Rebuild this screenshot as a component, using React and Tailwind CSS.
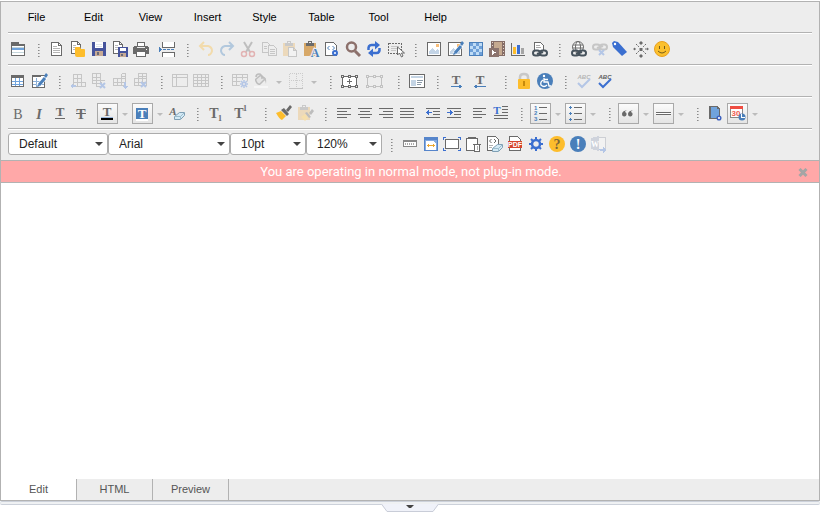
import React, { useState } from "react";

const DARK = "#6a6a6a";
const LIGHT = "#c6c6c6";
const BLUE = "#4a7fba";
const ROYAL = "#3b6fd0";
const PALE = "#b4c6e6";
const YELLOW = "#fdbd2c";

const Glyph = ({ x, y, size = 16, fill = DARK, bold, italic, children }) => (
  <text
    x={x}
    y={y}
    fontSize={size}
    fill={fill}
    stroke="none"
    textAnchor="middle"
    fontWeight={bold ? 700 : 400}
    fontStyle={italic ? "italic" : "normal"}
    fontFamily="'Liberation Serif', serif"
  >
    {children}
  </text>
);

const Grid = ({ x = 1, y = 2, w = 14, h = 13, cols, rows, color = LIGHT }) => (
  <path
    stroke={color}
    d={
      `M${x + 0.5} ${y + 0.5}h${w - 1}v${h - 1}h${1 - w}z` +
      cols.map((c) => `M${c + 0.5} ${y}v${h}`).join("") +
      rows.map((r) => `M${x} ${r + 0.5}h${w}`).join("")
    }
  />
);

const Lines = ({ rows, color = DARK }) => (
  <path stroke={color} d={rows.map(([x, y, w]) => `M${x} ${y + 0.5}h${w}`).join("")} />
);

const SmallDoc = ({ color = DARK }) => (
  <>
    <path fill="#fff" stroke={color} d="M1.5 .5h6l3 3v9h-9z" />
    <path stroke={color} d="M7.5 .5v3h3" />
    <path stroke="#b9b9b9" d="M3 4.5h3M3 6.5h6M3 8.5h6" />
  </>
);

const Chain = ({ y = 12, color = "#46525c" }) => (
  <g stroke={color} strokeWidth="2" shapeRendering="auto">
    <rect x="2" y={y - 2.5} width="7" height="5" rx="2.5" />
    <rect x="9" y={y - 2.5} width="7" height="5" rx="2.5" />
    <path d={`M6 ${y + 1}L12 ${y - 1}`} />
  </g>
);

const Clipboard = ({ color = "#ecd9bb", clip = "#c9c9c9" }) => (
  <>
    <rect x="1" y="2" width="12" height="13" fill={color} />
    <path fill={clip} d="M3 2h2V0h4v2h2v3H3z" />
    <rect x="6" y="1" width="2" height="1" fill="#eee" />
  </>
);

const Picture = () => (
  <>
    <rect x="1.5" y="1.5" width="13" height="13" fill="#fff" stroke={DARK} />
    <path fill="#c3d4e6" d="M3 10l3-3 3 3 2-2 2 2v3H3z" />
    <rect x="10" y="3" width="3" height="3" fill="#f7bd7a" />
  </>
);

const Pencil = () => (
  <g shapeRendering="auto">
    <path stroke="#fff" strokeWidth="4" d="M7 13l8-9" />
    <path stroke={BLUE} strokeWidth="3" d="M8 12l6-7" />
    <path fill={BLUE} d="M13 3l2-3 2 2-2 3zM6 14l1-3 2 2z" />
  </g>
);

const Dot = ({ fill, children, text = "#fff" }) => (
  <g shapeRendering="auto">
    <circle cx="8" cy="8" r="8" fill={fill} />
    <text x="8" y="13" fontSize="14" fontWeight="700" textAnchor="middle" fill={text} fontFamily="'Liberation Serif', serif">
      {children}
    </text>
  </g>
);

const Handles = ({ color }) => (
  <>
    <rect x="1.5" y="3.5" width="14" height="10" stroke={color} fill={color === DARK ? "#fff" : "none"} />
    {[0, 7, 14].map((x) =>
      [2, 12].map((y) => (
        <rect key={x + "-" + y} x={x + 0.5} y={y + 0.5} width="2" height="2" fill="#eee" stroke={color} />
      ))
    )}
  </>
);

const TableCells = ({ d, children }) => (
  <>
    <path stroke={LIGHT} d={d} />
    {children}
  </>
);

const Cross = ({ x, y }) => (
  <path stroke={PALE} strokeWidth="2" shapeRendering="auto" d={`M${x} ${y}l5 5m0-5l-5 5`} />
);

const Eraser = ({ x = 6, y = 7 }) => (
  <g shapeRendering="auto" transform={`translate(${x} ${y})`}>
    <path fill="#d3e9f5" stroke="#7f9fb4" d="M.5 5.5l5-4h5v3l-4 4h-6z" />
    <path stroke="#9bbccc" d="M.5 5.5h6l4-4M6.5 5.5v3" />
  </g>
);

const Gear = ({ color = ROYAL }) => (
  <g shapeRendering="auto" stroke={color}>
    <circle cx="8" cy="8" r="4" strokeWidth="2.5" />
    <path strokeWidth="2" d="M8 1v3M8 12v3M1 8h3M12 8h3M3 3l2 2M11 11l2 2M13 3l-2 2M5 11l-2 2" />
  </g>
);

const icons = {
  form: (
    <>
      <rect x="1.5" y="4.5" width="13" height="10" fill="#fff" stroke={DARK} />
      <path fill={DARK} d="M1 1h8v2h6v2H1z" />
      <path stroke="#70a3dc" strokeWidth="2" d="M2 8h12" />
      <path stroke="#c4d6dc" d="M2 6.5h12M2 11.5h12" />
    </>
  ),
  newDoc: (
    <>
      <path fill="#fff" stroke={DARK} d="M2.5 1.5h7l3 3v10h-10z" />
      <path stroke={DARK} d="M9.5 1.5v3h3" />
      <path stroke="#b5b5b5" d="M4 5.5h4M4 7.5h7M4 9.5h7M4 11.5h7" />
    </>
  ),
  open: (
    <>
      <SmallDoc />
      <path fill={YELLOW} shapeRendering="auto" d="M6 6h4l1 2h3q1 0 1 1v6q0 1-1 1H7q-2 0-2-2V7q0-1 1-1z" />
    </>
  ),
  save: (
    <>
      <rect x="1" y="1" width="14" height="14" fill="#46549c" />
      <rect x="4" y="1" width="8" height="6" fill="#fff" />
      <path stroke="#dde3ea" d="M5 3.5h6M5 5.5h6" />
      <rect x="4" y="10" width="8" height="5" fill="#c7aa95" />
      <rect x="6" y="11" width="2" height="3" fill="#6a6a78" />
    </>
  ),
  saveAs: (
    <>
      <SmallDoc />
      <rect x="6" y="6" width="10" height="10" fill="#46549c" />
      <rect x="8" y="7" width="6" height="3" fill="#fff" />
      <rect x="8" y="12" width="6" height="4" fill="#c7aa95" />
      <rect x="9" y="13" width="2" height="2" fill="#6a6a78" />
    </>
  ),
  print: (
    <>
      <path fill={DARK} d="M1 5h3v2h8V5h3v1h1v7H0V6h1z" />
      <rect x="4.5" y="1.5" width="7" height="4" fill="#fff" stroke={DARK} />
      <rect x="3.5" y="10.5" width="9" height="5" fill="#fff" stroke={DARK} />
      <rect x="13" y="8" width="1" height="1" fill="#fff" />
    </>
  ),
  pageBreak: (
    <>
      <path fill="#fff" stroke={DARK} d="M4.5 1v5.5h12V1M4.500 16v-4.500h12v4.500" />
      <path stroke={BLUE} strokeDasharray="3 1" d="M5 8.5h12" />
      <path fill={BLUE} d="M1 6l3 2v1l-3 2z" />
    </>
  ),
  undo: (
    <path stroke="#f2dbac" strokeWidth="2" shapeRendering="auto" d="M6 1L2 5l4 4M2 5h8q4 1 4 5-1 4-4 4" />
  ),
  redo: (
    <path stroke="#b2c8dd" strokeWidth="2" shapeRendering="auto" d="M10 1l4 4-4 4M14 5H6q-4 1-4 5 1 4 4 4" />
  ),
  cut: (
    <g shapeRendering="auto">
      <path stroke="#bebebe" strokeWidth="2" d="M4 1l6 10M12 1L6 11" />
      <circle cx="4" cy="13" r="2.5" stroke="#e2b3b3" strokeWidth="1.5" />
      <circle cx="12" cy="13" r="2.5" stroke="#e2b3b3" strokeWidth="1.5" />
    </g>
  ),
  copy: (
    <>
      <path stroke={LIGHT} d="M1.5 1.5h5l2 2v8h-7zM3 5.5h3M3 7.5h3" />
      <path fill="#eee" stroke={LIGHT} d="M7.5 4.5h5l3 3v7h-8zM9 8.5h5M9 10.5h5M9 12.5h5" />
    </>
  ),
  paste: (
    <>
      <Clipboard />
      <path fill="#f2f2f2" stroke={LIGHT} d="M6.5 6.5h5l3 3v6h-8zM11.5 6.5v3h3" />
    </>
  ),
  pasteText: (
    <>
      <Clipboard color="#d7a868" clip={DARK} />
      <g shapeRendering="auto">
        <text x="12" y="16" fontSize="12" fontWeight="700" textAnchor="middle" fill={BLUE} stroke="#eee" strokeWidth="2" paintOrder="stroke" fontFamily="'Liberation Serif', serif">A</text>
      </g>
    </>
  ),
  source: (
    <>
      <path fill="#fff" stroke={DARK} d="M1.5 1.5h8l3 3v10h-11z" />
      <path stroke={BLUE} shapeRendering="auto" d="M5.5 5L3.5 7l2 2M8.5 5l2 2-2 2" />
      <circle cx="11" cy="12" r="2" fill="#fff" stroke={ROYAL} strokeWidth="2" shapeRendering="auto" />
    </>
  ),
  find: (
    <g shapeRendering="auto" stroke="#8c706b">
      <circle cx="6.5" cy="6" r="4.5" strokeWidth="2.5" />
      <path strokeWidth="3" d="M10 10l5 5" />
    </g>
  ),
  refresh: (
    <g shapeRendering="auto" stroke={ROYAL} strokeWidth="2.5">
      <path d="M2.500 9q-.5-5 3-5H9M13.500 7q.5 5-3 5H7" />
      <path fill={ROYAL} stroke="none" d="M9 0l5 4-5 4.500zM7 7.500V16l-5-4z" />
    </g>
  ),
  selectAll: (
    <>
      <rect x="1.5" y="2.5" width="13" height="10" stroke={DARK} strokeDasharray="2 1" />
      <path stroke={LIGHT} d="M4 5.5h8M4 7.5h6M4 9.5h5" />
      <path fill="#fff" stroke={DARK} shapeRendering="auto" d="M10.5 6v8l2-2 2 4 1.500-1-1.500-3h3z" />
    </>
  ),
  image: <Picture />,
  editImage: (
    <>
      <Picture />
      <Pencil />
    </>
  ),
  background: (
    <>
      <rect x="1.5" y="1.5" width="13" height="13" fill="#bfdcf6" stroke={BLUE} />
      {[0, 1, 2, 3].map((r) =>
        [0, 1].map((c) => (
          <rect key={r + "" + c} x={2 + c * 6 + (r % 2) * 3} y={2 + r * 3} width="3" height="3" fill="#6fa0d8" />
        ))
      )}
    </>
  ),
  video: (
    <>
      <rect x="2" y="0" width="14" height="15" fill="#856d67" />
      <rect x="5" y="1" width="8" height="13" fill="#c5a98f" />
      <path stroke="#e5d8cd" strokeDasharray="1 2" d="M3.5 1v13M14.5 1v13" />
      <rect x="0" y="7" width="10" height="9" fill="#8c746e" />
      <path fill="#fff" d="M3 9l4 2.500L3 14z" />
    </>
  ),
  chart: (
    <>
      <path stroke={DARK} d="M1.5 2v12.500H15" />
      <path fill={YELLOW} d="M3 6h3v7H3z" />
      <path fill={ROYAL} d="M7 4h3v9H7z" />
      <path fill="#a5a5a5" d="M11 7h3v6h-3z" />
    </>
  ),
  fileLink: (
    <>
      <path fill="#fff" stroke={DARK} d="M3.5 9V1.500h6l3 3V9" />
      <path stroke="#aaa" d="M5 4.5h4M5 6.5h5" />
      <Chain />
    </>
  ),
  link: (
    <>
      <g shapeRendering="auto" stroke={DARK}>
        <circle cx="8" cy="6" r="5.5" fill="#fff" />
        <ellipse cx="8" cy="6" rx="2.5" ry="5.5" />
        <path d="M3 4h10M3 7h10" />
      </g>
      <Chain />
    </>
  ),
  unlink: (
    <>
      <Chain y={6} color="#c6c6c6" />
      <Cross x={8} y={9} />
    </>
  ),
  bookmark: (
    <g shapeRendering="auto">
      <path fill={ROYAL} d="M0 2l2-2 4 1 9 10-5 4L1 6z" />
      <circle cx="3" cy="3" r="1.2" fill="#fff" />
    </g>
  ),
  symbol: (
    <g shapeRendering="auto">
      <path fill={DARK} d="M6.5 7h3v3h-3zM8 0l2 2-2 2-2-2zM8 13l2 2-2 2-2-2zM0 8l2-1.500v3zM16 8l-2-1.500v3z" />
      <path stroke={DARK} d="M3 3l3 3M13 3l-3 3M3 13l3-3M13 13l-3-3M1 8h3M12 8h3" strokeDasharray="2 1" />
    </g>
  ),
  emoticon: (
    <g shapeRendering="auto">
      <circle cx="8" cy="8" r="7.5" fill="#fbc02d" stroke="#e9a01f" />
      <path stroke="#755c1b" d="M5.5 5v3M10.5 5v3M4 10q4 4 8 0" />
    </g>
  ),
  table: (
    <>
      <rect x="2" y="3" width="12" height="11" fill="#fff" />
      <path stroke="#70a3dc" d="M5.5 5v9M9.5 5v9M2 8.5h12M2 11.5h12" />
      <path stroke={DARK} d="M1.5 2.5h12v11h-12z" />
      <path fill={DARK} d="M1 2h13v3H1z" />
    </>
  ),
  editTable: (
    <>
      <rect x="1.5" y="2.5" width="12" height="12" fill="#fff" stroke={DARK} />
      <path stroke="#8aaed6" d="M5.5 5v9M2 8.5h11M2 11.5h11" />
      <path fill={DARK} d="M1 2h9v2H1z" />
      <Pencil />
    </>
  ),
  rowBefore: (
    <TableCells d="M3.5 1.5h8v12h-8zM7.5 1.5v12M3.5 5.5h8M3.5 9.5h12v4h-12">
      <path fill={PALE} d="M0 13l3-3v2h3v2H3v2z" />
    </TableCells>
  ),
  rowDelete: (
    <TableCells d="M1.5 .5h8v10h-8zM5.5 .5v13h5v-5M1.5 4.5h8M1.5 7.5h12">
      <Cross x={9} y={10} />
    </TableCells>
  ),
  colBefore: (
    <TableCells d="M1.5 5.5h12v7h-12zM5.5 5v8M9.5 .5v12M9.5 .5h4v12M1.5 9.5h12M9.5 3.5h4">
      <path fill={PALE} d="M12 9h2v4h2l-3 3-3-3h2z" />
    </TableCells>
  ),
  colDelete: (
    <TableCells d="M1.5 5.5h12v7h-12zM5.5 0v13M9.5 .5v8M5.5 .5h8v12M1.5 9.5h12M5.5 3.5h8">
      <Cross x={8} y={9} />
    </TableCells>
  ),
  merge: <Grid x={0} y={1} w={16} h={13} cols={[4]} rows={[4]} />,
  split: <Grid x={0} y={1} w={16} h={13} cols={[4, 8, 12]} rows={[4, 7, 10]} />,
  tableProps: (
    <>
      <Grid x={0} y={1} w={16} h={12} cols={[4, 10]} rows={[4, 8]} />
      <g stroke={PALE} shapeRendering="auto">
        <circle cx="12" cy="11" r="4.500" stroke="none" fill="#ededed" />
        <path strokeWidth="1.5" d="M12 7v8M8 11h8M9 8l6 6M15 8l-6 6" />
        <circle cx="12" cy="11" r="1.5" fill="#ededed" />
      </g>
    </>
  ),
  fill: (
    <>
      <g shapeRendering="auto">
        <path fill="#e5e5e5" stroke="#bdbdbd" strokeWidth="1.5" d="M3 6l5-4 4 4-5 5q-1 1-3-1-2-3-1-4zM3 4q0-3 3-3t3 5" />
        <path fill="#c2c2c2" d="M11 4q3 1 2 7-1-5-3-5z" />
      </g>
      <rect x="1" y="13" width="14" height="2" fill="#f6f6f6" />
    </>
  ),
  border: (
    <>
      <path stroke="#cccccc" strokeDasharray="1 1" d="M1.5 .5h13v14M1.5 .5v14M8.5 1v13M1 7.5h14" />
      <path stroke="#c2c2c2" d="M1 15.5h14" />
    </>
  ),
  layer: (
    <>
      <Handles color={DARK} />
      <path stroke={DARK} d="M6 8.5h5M8.5 6v5" />
    </>
  ),
  layerProps: <Handles color="#c2c2c2" />,
  template: (
    <>
      <rect x=".5" y="1.5" width="15" height="13" fill="#fff" stroke={DARK} />
      <path stroke="#c4d4e4" strokeWidth="2" d="M2 4h12" />
      <rect x="2" y="7" width="5" height="6" fill="#c4d4e4" />
      <path stroke="#8b9aa8" d="M8 7.5h6M8 9.5h5M8 11.5h4" />
    </>
  ),
  ltr: (
    <>
      <Glyph x={8} y={11} size={13} bold>T</Glyph>
      <path stroke={BLUE} d="M3 13.5h10" />
      <path fill={BLUE} d="M11 12h1l2 1v1l-2 1h-1z" />
    </>
  ),
  rtl: (
    <>
      <Glyph x={7} y={11} size={13} bold>T</Glyph>
      <path stroke={BLUE} d="M2 13.5h11" />
      <path fill={BLUE} d="M4 12H3l-2 1v1l2 1h1z" />
    </>
  ),
  lock: (
    <g shapeRendering="auto">
      <path stroke="#c8c8c8" strokeWidth="2.5" d="M4 8V4q0-3 4-3t4 3v4" />
      <rect x="2" y="6" width="12" height="10" rx="1" fill={YELLOW} />
      <path fill="#c78a0c" d="M7 8h2v5H7z" />
    </g>
  ),
  accessibility: (
    <g shapeRendering="auto">
      <circle cx="8" cy="8" r="8" fill={BLUE} />
      <circle cx="7" cy="3" r="1.2" fill="#fff" />
      <path stroke="#fff" strokeWidth="1.3" d="M7 5v4h4l1 4h2M7 6.5h4M6 7q-3 2-2 5 3 3 6 0" />
    </g>
  ),
  spellOff: (
    <>
      <text x="8" y="6" fontSize="6" fontWeight="700" fontStyle="italic" textAnchor="middle" fill="#b5b5b5" fontFamily="'Liberation Sans', sans-serif">ABC</text>
      <path stroke={PALE} strokeWidth="2" shapeRendering="auto" d="M2 10l4 4 8-8" />
    </>
  ),
  spell: (
    <>
      <text x="8" y="6" fontSize="6" fontWeight="700" fontStyle="italic" textAnchor="middle" fill="#5f5f5f" fontFamily="'Liberation Sans', sans-serif">ABC</text>
      <path stroke={ROYAL} strokeWidth="2" shapeRendering="auto" d="M2 10l4 4 8-8" />
    </>
  ),
  bold: <Glyph x={8} y={14} size={14}>B</Glyph>,
  italic: <Glyph x={8} y={14} size={14} italic bold>I</Glyph>,
  underline: (
    <>
      <Glyph x={8} y={11} size={13} bold>T</Glyph>
      <path stroke={DARK} d="M3 13.5h10" />
    </>
  ),
  strike: (
    <>
      <Glyph x={8} y={14} size={14} bold>T</Glyph>
      <path stroke={DARK} d="M3 8.5h10" />
    </>
  ),
  fontColor: (
    <>
      <Glyph x={8} y={11} size={13} bold>T</Glyph>
      <path stroke="#9cb8dc" d="M2 12.5h12" />
      <path fill="#000" d="M2 13h12v2H2z" />
    </>
  ),
  backColor: (
    <>
      <rect x="2" y="3" width="12" height="11" fill={BLUE} />
      <Glyph x={8} y={13} size={13} fill="#fff" bold>T</Glyph>
      <path fill="#fff" d="M2 14h12v2H2z" />
    </>
  ),
  clearFormat: (
    <>
      <Glyph x={4} y={10} size={11} italic bold>A</Glyph>
      <Eraser x={5} y={6} />
    </>
  ),
  subscript: (
    <>
      <Glyph x={6} y={13} size={14} bold>T</Glyph>
      <Glyph x={12} y={16} size={8} bold>1</Glyph>
    </>
  ),
  superscript: (
    <>
      <Glyph x={6} y={13} size={14} bold>T</Glyph>
      <Glyph x={12} y={6} size={8} bold>1</Glyph>
    </>
  ),
  copyFormat: (
    <g shapeRendering="auto">
      <path fill={YELLOW} d="M0 8l5-2 5 5-4 4q-2 0-6-7z" />
      <path fill={DARK} d="M5 5l3-2 5 6-2 2zM10 5l4-5 2 2-4 5z" />
    </g>
  ),
  pasteFormat: (
    <>
      <Clipboard />
      <g shapeRendering="auto">
        <path fill="#f6dfab" d="M4 12l4-3 3 4-3 3z" />
        <path fill="#bdbdbd" d="M8 8l2-1 4 5-2 1zM12 8l3-4 2 2-3 4z" />
      </g>
    </>
  ),
  alignLeft: <Lines rows={[[1, 3, 14], [1, 6, 10], [1, 9, 14], [1, 12, 10]]} />,
  alignCenter: <Lines rows={[[1, 3, 14], [3, 6, 10], [1, 9, 14], [3, 12, 10]]} />,
  alignRight: <Lines rows={[[1, 3, 14], [5, 6, 10], [1, 9, 14], [5, 12, 10]]} />,
  justify: <Lines rows={[[1, 3, 14], [1, 6, 14], [1, 9, 14], [1, 12, 14]]} />,
  outdent: (
    <>
      <Lines rows={[[1, 3, 14], [8, 6, 7], [8, 9, 7], [1, 12, 14]]} />
      <path stroke={ROYAL} d="M1 7.5h6M2.5 6v3M3.5 5v5" />
    </>
  ),
  indent: (
    <>
      <Lines rows={[[1, 3, 14], [8, 6, 7], [8, 9, 7], [1, 12, 14]]} />
      <path stroke={ROYAL} d="M1 7.5h6M5.5 6v3M4.5 5v5" />
    </>
  ),
  lineHeight: <Lines rows={[[1, 3, 13], [1, 6, 9], [1, 9, 13], [1, 12, 9]]} />,
  paragraph: (
    <>
      <Glyph x={4} y={9} size={11} fill={ROYAL} bold>T</Glyph>
      <Lines rows={[[9, 1, 6], [9, 4, 6], [9, 7, 6], [1, 10, 14], [1, 13, 14]]} />
    </>
  ),
  ordered: (
    <>
      <Lines rows={[[7, 2, 8], [7, 8, 8], [7, 14, 8]]} />
      <g fontSize="6" fontWeight="700" fill={BLUE} fontFamily="'Liberation Sans', sans-serif">
        <text x="2" y="5">1</text>
        <text x="2" y="10">2</text>
        <text x="2" y="16">3</text>
      </g>
    </>
  ),
  unordered: (
    <>
      <Lines rows={[[7, 2, 8], [7, 8, 8], [7, 14, 8]]} />
      <path stroke={BLUE} d="M2 2.5h3M3.5 1v3M2 8.5h3M3.5 7v3M2 14.5h3M3.5 13v3" />
    </>
  ),
  quote: (
    <g shapeRendering="auto" fill={DARK}>
      <path d="M7 5Q2 6 2 9a2.3 2.3 0 1 0 3-2q0-1 2-2zM13 5Q8 6 8 9a2.3 2.3 0 1 0 3-2q0-1 2-2z" />
    </g>
  ),
  rule: (
    <>
      <path fill="#fff" d="M1 8h15v1H1z" />
      <path stroke={DARK} d="M1 7.5h15M1 9.5h15" />
    </>
  ),
  addPage: (
    <>
      <path fill="#70a3dc" stroke={DARK} d="M1.5 1.5h8l2 2v10h-10z" />
      <path stroke={DARK} d="M2.5 2v12M9.5 1.5v2h2" />
      <circle cx="11" cy="13" r="1.8" fill="#fff" stroke="#3e63c0" strokeWidth="1.5" shapeRendering="auto" />
    </>
  ),
  datetime: (
    <>
      <rect x="1.5" y="1.5" width="12" height="11" fill="#fff" stroke="#888" />
      <path fill="#ef4d42" d="M1 1h13v3H1z" />
      <text x="7" y="11" fontSize="8" fontWeight="700" textAnchor="middle" fill="#ef5e50" fontFamily="'Liberation Sans', sans-serif">30</text>
      <circle cx="13" cy="12" r="3.500" fill={BLUE} shapeRendering="auto" />
      <path stroke="#fff" d="M12.5 9v3.500h3" />
    </>
  ),
  ruler: (
    <>
      <rect x="1.5" y="4.5" width="13" height="6" fill="#fff" stroke="#888" />
      <rect x="1" y="4" width="14" height="2" fill="#888" />
      <path stroke="#aaa" d="M3.5 7v2M5.5 7v2M7.5 7v2M9.5 7v2M11.5 7v2" />
    </>
  ),
  fitWidth: (
    <>
      <rect x="1" y="1" width="14" height="14" fill="#5685cb" />
      <path fill="#86abe0" d="M2 4h12v10H2z" />
      <path fill="#fff" d="M3 5h7l3 3v6H3z" />
      <path stroke="#eda72e" d="M4 9.5h8M5.5 8v3M10.5 8v3" />
    </>
  ),
  fullscreen: (
    <>
      <rect x="1.5" y="3.5" width="13" height="9" fill="#fff" stroke={DARK} />
      <path stroke={ROYAL} d="M-.5 4V1.500H2M14 1.500h2.500V4M-.5 12v2.500H2M14 14.500h2.500V12" />
    </>
  ),
  clipboardTrash: (
    <>
      <rect x="1.5" y="2.5" width="11" height="12" rx="1" fill="#fff" stroke={DARK} />
      <path fill={DARK} d="M3 1h8v2H3z" />
      <path fill="#fff" stroke={DARK} d="M9.5 8.5h5v7h-5zM8 8.5h8" />
      <path stroke="#b0b0b0" d="M12.5 10v4" />
    </>
  ),
  clearSource: (
    <>
      <path fill="#fff" stroke={DARK} d="M1.5 .5h8l3 3v11h-11z" />
      <path stroke={DARK} shapeRendering="auto" d="M5.5 3l-2 2 2 2M8 3l2 2-2 2" />
      <path stroke="#b0b0b0" d="M3 9.5h4M3 11.5h3" />
      <Eraser x={6} y={7} />
    </>
  ),
  pdf: (
    <>
      <path fill="#fff" stroke={DARK} d="M2.5 .5h8l3 3v11h-11z" />
      <rect x="1" y="5" width="14" height="7" fill="#d6452d" />
      <text x="8" y="11" fontSize="7" fontWeight="700" textAnchor="middle" fill="#fff" fontFamily="'Liberation Sans', sans-serif">PDF</text>
    </>
  ),
  settings: <Gear />,
  help: <Dot fill={YELLOW} text="#7d6537">?</Dot>,
  about: <Dot fill={BLUE}>!</Dot>,
  word: (
    <>
      <path stroke="#cdcfd4" fill="#f2f2f2" d="M7.5 1.5h7v12h-7z" />
      <path fill="#cfd3dc" d="M0 2l8-2v15l-8-2z" />
      <Glyph x={4} y={11} size={8} fill="#fff" bold>W</Glyph>
      <path fill={PALE} d="M8 13h4v-2l4 3-4 3v-2H9z" />
    </>
  ),
};

const SEP = "|";
const CARET = "v";

const fileRow = [
  ["form", "Form"], SEP,
  ["newDoc", "New document"], ["open", "Open"], ["save", "Save"], ["saveAs", "Save as"], ["print", "Print"],
  ["pageBreak", "Page break", "ml-1 mr-px"], SEP,
  ["undo", "Undo"], ["redo", "Redo"], ["cut", "Cut"], ["copy", "Copy"], ["paste", "Paste"],
  ["pasteText", "Paste as text"], ["source", "Source"], ["find", "Find"], ["refresh", "Refresh"], ["selectAll", "Select all"], SEP,
  ["image", "Image"], ["editImage", "Edit image"], ["background", "Background"], ["video", "Video"], ["chart", "Chart"],
  ["fileLink", "File link"], SEP,
  ["link", "Link"], ["unlink", "Unlink"], ["bookmark", "Bookmark"], ["symbol", "Symbol"], ["emoticon", "Emoticon"],
];

const tableRow = [
  ["table", "Table"], ["editTable", "Draw table"], SEP,
  ["rowBefore", "Insert row"], ["rowDelete", "Delete row"], ["colBefore", "Insert column"], ["colDelete", "Delete column"], SEP,
  ["merge", "Merge cells"], ["split", "Split cells"], SEP,
  ["tableProps", "Table properties"], ["fill", "Cell fill"], CARET, ["border", "Cell border"], CARET, SEP,
  ["layer", "Layer", "mr-1"], ["layerProps", "Layer properties", "mr-1"], SEP,
  ["template", "Template"], SEP,
  ["ltr", "Left to right", "mr-1"], ["rtl", "Right to left", "mr-1"], SEP,
  ["lock", "Privacy"], ["accessibility", "Accessibility"], SEP,
  ["spellOff", "Spell check options"], ["spell", "Spell check"],
];

const BOX = "border border-[#a9a9a9] bg-linear-to-b from-[#fbfbfb] to-[#e4e4e4]";

const formatRow = [
  ["bold", "Bold"], ["italic", "Italic"], ["underline", "Underline"], ["strike", "Strikethrough"],
  ["fontColor", "Font color", "ml-[5px] " + BOX], CARET, ["backColor", "Background color", BOX], CARET,
  ["clearFormat", "Clear format"], SEP,
  ["subscript", "Subscript"], ["superscript", "Superscript", "mx-1"], SEP,
  ["copyFormat", "Copy format"], ["pasteFormat", "Paste format"], SEP,
  ["alignLeft", "Align left"], ["alignCenter", "Align center"], ["alignRight", "Align right"], ["justify", "Justify"],
  ["outdent", "Outdent", "ml-[5px]"], ["indent", "Indent"],
  ["lineHeight", "Line height", "ml-[5px]"], ["paragraph", "Paragraph"], SEP,
  ["ordered", "Numbered list", BOX], CARET, ["unordered", "Bulleted list", BOX], CARET, SEP,
  ["quote", "Quote", BOX], CARET, ["rule", "Horizontal rule", BOX], CARET, SEP,
  ["addPage", "Add page"], ["datetime", "Date and time", BOX], CARET,
];

const viewRow = [
  SEP,
  ["ruler", "Ruler"], ["fitWidth", "Fit width"], ["fullscreen", "Full screen"], ["clipboardTrash", "Clipboard"],
  ["clearSource", "Clean up source"], ["pdf", "PDF"], ["settings", "Settings"], ["help", "Help"], ["about", "About"],
  ["word", "Import Word"],
];

const Separator = () => (
  <svg className="h-[21px] w-[18px] shrink-0" viewBox="0 0 18 21" shapeRendering="crispEdges">
    {[5, 8, 11, 14, 17].map((y) => (
      <React.Fragment key={y}>
        <rect x="9" y={y} width="1" height="1" fill="#8a8a8a" />
        <rect x="10" y={y} width="1" height="1" fill="#b5b5b5" />
      </React.Fragment>
    ))}
  </svg>
);

const Caret = () => (
  <button type="button" aria-label="More" className="flex h-[21px] w-3.5 shrink-0 items-center justify-center">
    <svg className="mt-0.5 h-[3px] w-[6px]" viewBox="0 0 6 3">
      <path fill="#bcbcbc" d="M0 0h6L3 3z" />
    </svg>
  </button>
);

const Tools = ({ items }) =>
  items.map((item, i) => {
    if (item === SEP) return <Separator key={i} />;
    if (item === CARET) return <Caret key={i} />;
    const [name, label, extra = ""] = item;
    return (
      <button
        key={i}
        type="button"
        aria-label={label}
        className={`flex h-[21px] w-[21px] shrink-0 items-center justify-center ${extra}`}
      >
        <svg className="h-[17px] w-[17px] shrink-0 overflow-visible" viewBox="0 0 17 17" fill="none" shapeRendering="crispEdges">
          {icons[name]}
        </svg>
      </button>
    );
  });

const Toolbar = ({ items }) => (
  <div className="border-b border-[#b2b2b2]">
    <div className="flex h-[31px] items-start border-t border-white pt-[5px]">
      <Tools items={items} />
    </div>
  </div>
);

const Picker = ({ label, options, className }) => (
  <div className={`relative ${className}`}>
    <select
      aria-label={label}
      className="block h-[22px] w-full appearance-none rounded-[3px] border border-[#acacac] bg-white pl-2.5 text-xs leading-5 text-[#222]"
    >
      {options.map((o) => (
        <option key={o}>{o}</option>
      ))}
    </select>
    <svg className="pointer-events-none absolute top-[9px] right-[5px] h-1 w-2" viewBox="0 0 8 4">
      <path fill="#444" d="M0 0h8L4 4z" />
    </svg>
  </div>
);

const menus = ["File", "Edit", "View", "Insert", "Style", "Table", "Tool", "Help"];
const tabs = ["Edit", "HTML", "Preview"];

export default function App() {
  const [tab, setTab] = useState("Edit");
  const [notice, setNotice] = useState(true);

  return (
    <div className="flex h-screen flex-col bg-white pt-px pr-px pb-px font-['Liberation_Sans',Arial,sans-serif]">
      <div className="flex min-h-0 flex-1 flex-col border border-[#b2b2b2] bg-[#ededed]">
        <div className="px-[7px]">
          {/* Menu bar */}
          <nav className="flex h-[31px] border-b border-[#b2b2b2]">
            {menus.map((m) => (
              <button key={m} type="button" className="h-[30px] w-[57px] text-center text-[11px] text-black">
                {m}
              </button>
            ))}
          </nav>

          <Toolbar items={fileRow} />
          <Toolbar items={tableRow} />
          <Toolbar items={formatRow} />

          <div className="flex h-[31px] border-t border-white">
            <div className="flex pt-[3px]">
              <Picker label="Format" options={["Default"]} className="w-[100px]" />
              <Picker label="Font" options={["Arial"]} className="w-[122px]" />
              <Picker label="Font size" options={["10pt"]} className="w-[76px]" />
              <Picker label="Line spacing" options={["120%"]} className="w-[76px]" />
            </div>
            <div className="flex items-start pt-1">
              <Tools items={viewRow} />
            </div>
          </div>
        </div>

        {/* Notice */}
        {notice && (
          <div className="flex h-[23px] items-center border-y border-[#b2b2b2] bg-[#ffa8a8] pt-px">
            <p className="flex-1 pl-6 text-center font-['Roboto',sans-serif] text-[13px] leading-5 text-white">
              You are operating in normal mode, not plug-in mode.
            </p>
            <button type="button" aria-label="Close" onClick={() => setNotice(false)} className="mr-2.5 p-px">
              <svg className="h-[9px] w-[10px]" viewBox="0 0 10 9">
                <path stroke="#a5a5a5" strokeWidth="3" d="M1.5 1l7 7m0-7l-7 7" />
              </svg>
            </button>
          </div>
        )}

        <textarea aria-label="Content" className="block min-h-0 w-full flex-1 resize-none bg-white p-2 text-xs outline-none" />

        {/* Mode tabs */}
        <div className="flex h-[21px]">
          {tabs.map((t) => (
            <button
              key={t}
              type="button"
              onClick={() => setTab(t)}
              className={`w-[76px] border-r border-[#b2b2b2] text-center text-[11px] text-[#555] ${
                tab === t ? "bg-white" : ""
              }`}
            >
              {t}
            </button>
          ))}
        </div>
      </div>

      {/* Resize handle */}
      <div className="h-1 rounded-sm border-y border-[#ccd1da] bg-[#eff1f3]" />
      <button type="button" aria-label="Resize" className="-mt-px self-center">
        <svg className="block h-2 w-[58px]" viewBox="0 0 58 8">
          <path fill="#f0f2f9" d="M0 0l6 7.500h46L58 0z" />
          <path fill="none" stroke="#c9cdd8" d="M.5 0l5.500 7.500h46L57.500 0" />
          <path fill="#444" d="M25 1h8l-3 3h-2z" />
        </svg>
      </button>
    </div>
  );
}
